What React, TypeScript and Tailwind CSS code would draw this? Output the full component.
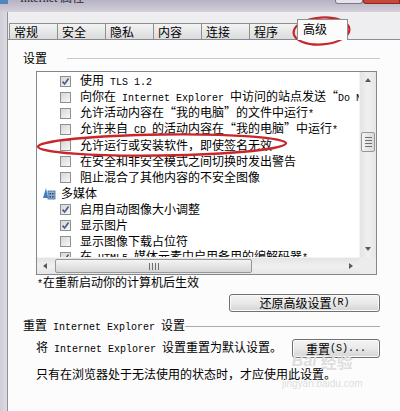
import React from "react";

const CN = "font-['Noto_Sans_CJK_SC',sans-serif]";

function L({ children }: { children: React.ReactNode }) {
  return <span className="font-['Liberation_Mono',monospace] text-[10px]">{children}</span>;
}

function Check({ on }: { on?: boolean }) {
  return (
    <span className="flex h-[11px] w-[11px] shrink-0 items-center justify-center border border-[#8e8f8f] bg-gradient-to-br from-[#d6d6d6] to-[#f7f7f7]">
      {on && (
        <svg width="9" height="9" viewBox="0 0 9 9">
          <path d="M1.5 4.6 L3.6 7 L7.6 1.4" stroke="#4b5d8c" strokeWidth="1.7" fill="none" />
        </svg>
      )}
    </span>
  );
}

function Arrow({ dir }: { dir: "up" | "down" | "left" | "right" }) {
  const d = {
    up: "M1 5 L4 1 L7 5 Z",
    down: "M1 2 L4 6 L7 2 Z",
    left: "M5 1 L1 4 L5 7 Z",
    right: "M2 1 L6 4 L2 7 Z",
  }[dir];
  return (
    <svg width="8" height="8" viewBox="0 0 8 8">
      <path d={d} fill="#5a5a5a" />
    </svg>
  );
}

function Grip({ vertical }: { vertical?: boolean }) {
  return vertical ? (
    <div className="flex flex-col gap-[2px]">
      <div className="h-[1px] w-[7px] bg-[#6f6f6f]" />
      <div className="h-[1px] w-[7px] bg-[#6f6f6f]" />
      <div className="h-[1px] w-[7px] bg-[#6f6f6f]" />
      <div className="h-[1px] w-[7px] bg-[#6f6f6f]" />
    </div>
  ) : (
    <div className="flex gap-[2px]">
      <div className="h-[7px] w-[1px] bg-[#6f6f6f]" />
      <div className="h-[7px] w-[1px] bg-[#6f6f6f]" />
      <div className="h-[7px] w-[1px] bg-[#6f6f6f]" />
      <div className="h-[7px] w-[1px] bg-[#6f6f6f]" />
    </div>
  );
}

function MediaIcon() {
  return (
    <svg width="14" height="14" viewBox="0 0 14 14">
      <path d="M1 12 L4 2 L6 12 Z" fill="#3d7fc6" />
      <rect x="6" y="5" width="7" height="8" fill="#8fb3d9" stroke="#46689a" strokeWidth="0.8" />
      <rect x="7.5" y="7" width="1.5" height="1.5" fill="#1f3f6e" />
      <rect x="10" y="7" width="1.5" height="1.5" fill="#1f3f6e" />
      <rect x="7.5" y="10" width="1.5" height="1.5" fill="#1f3f6e" />
      <rect x="10" y="10" width="1.5" height="1.5" fill="#1f3f6e" />
    </svg>
  );
}

const rows: { on?: boolean; text: React.ReactNode }[] = [
  { on: true, text: <>使用<L> TLS 1.2</L></> },
  { text: <>向你在<L> Internet Explorer </L>中访问的站点发送“<L>Do Not Track</L>”请求</> },
  { text: <>允许活动内容在“我的电脑”的文件中运行<L>*</L></> },
  { text: <>允许来自<L> CD </L>的活动内容在“我的电脑”中运行<L>*</L></> },
  { text: <>允许运行或安装软件，即使签名无效</> },
  { text: <>在安全和非安全模式之间切换时发出警告</> },
  { text: <>阻止混合了其他内容的不安全图像</> },
];

const media: { on?: boolean; text: React.ReactNode }[] = [
  { on: true, text: <>启用自动图像大小调整</> },
  { on: true, text: <>显示图片</> },
  { text: <>显示图像下载占位符</> },
  { on: true, text: <>在<L> HTML5 </L>媒体元素中启用备用的编解码器<L>*</L></> },
];

const tabs = ["常规", "安全", "隐私", "内容", "连接", "程序"];

function Button({ children, w }: { children: React.ReactNode; w: string }) {
  return (
    <div
      className={`flex items-center justify-center rounded-[3px] border border-[#707070] bg-gradient-to-b from-[#f4f4f4] via-[#e9e9e9] to-[#d3d3d3] text-[12px] leading-[14px] shadow-[inset_0_0_0_1px_#fbfbfb] ${w}`}
    >
      {children}
    </div>
  );
}

export default function App() {
  return (
    <div className={`relative h-[411px] w-[400px] overflow-hidden bg-[#d6d4dc] text-black ${CN}`}>
      {/* title bar, cut at top */}
      <div className="flex h-[12px] overflow-hidden bg-gradient-to-b from-[#b7b2c3] to-[#d3d0da]">
        <div className="-mt-[9px] ml-[0px] h-[13px] w-[8px] bg-[#4f86c0]" />
        <div className="-mt-[10px] ml-[12px] text-[12px] leading-[14px] text-[#2a2a35]">
          <span className="font-['Liberation_Serif',serif] text-[12px]">Internet </span>属性
        </div>
        <div className="ml-auto flex h-[4px]">
          <div className="w-[28px] rounded-b-[3px] border border-t-0 border-[#7c7a86] bg-[#e6e4ea]" />
          <div className="w-[37px] rounded-bl-[3px] border border-t-0 border-[#8a2a22] bg-[#c9463a]" />
        </div>
      </div>

      <div className="flex h-[399px]">
        <div className="w-[8px] shrink-0 border-r border-[#8e8f97] bg-gradient-to-r from-[#cfcdd6] to-[#dcdbe2]" />
        <div className="flex min-w-0 flex-1 flex-col bg-[#eeeef1]">
          {/* tabs */}
          <div className="mt-[7px] flex h-[20px] items-end pl-[1px]">
            {tabs.map((t) => (
              <div
                key={t}
                className="flex h-[16px] w-[48px] items-center border-l border-t border-[#8e8f8f] bg-gradient-to-b from-[#f3f3f3] to-[#dcdcdc] pl-[4px] text-[12px] leading-[14px] last:border-r last:w-[48px]"
              >
                {t}
              </div>
            ))}
            <div className="relative z-10 -mb-[1px] flex h-[21px] w-[51px] items-start border-x border-t border-[#8e8f8f] bg-[#fcfcfc] pl-[5px] pt-[2px] text-[12px] leading-[14px]">
              高级
            </div>
          </div>

          {/* panel */}
          <div className="flex flex-1 flex-col border-t border-[#898c95] bg-[#fcfcfc]">
            <div className="mt-[11px] flex h-[14px] items-center pl-[15px] pr-[20px]">
              <span className="text-[12px] leading-[14px]">设置</span>
              <div className="ml-[20px] h-[1px] flex-1 bg-[#c6c8cc]" />
            </div>

            {/* list box */}
            <div className="ml-[28px] mt-[6px] grid h-[204px] w-[341px] grid-cols-[1fr_17px] grid-rows-[1fr_17px] border border-[#828790] bg-white">
              <div className="overflow-hidden pt-[1px] text-[12px] leading-[16px]">
                {rows.map((r, i) => (
                  <div key={i} className="flex h-[16px] items-center gap-[9px] whitespace-nowrap pl-[23px]">
                    <Check on={r.on} />
                    <span>{r.text}</span>
                  </div>
                ))}
                <div className="flex h-[16px] items-center gap-[5px] whitespace-nowrap pl-[5px]">
                  <MediaIcon />
                  <span>多媒体</span>
                </div>
                {media.map((r, i) => (
                  <div key={i} className="flex h-[16px] items-center gap-[9px] whitespace-nowrap pl-[23px]">
                    <Check on={r.on} />
                    <span>{r.text}</span>
                  </div>
                ))}
              </div>

              {/* vertical scrollbar */}
              <div className="flex flex-col border-l border-[#f4f4f4] bg-gradient-to-r from-[#e4e4e4] via-[#f0f0f0] to-[#e6e6e6]">
                <div className="flex h-[17px] items-center justify-center">
                  <Arrow dir="up" />
                </div>
                <div className="h-[43px]" />
                <div className="mx-[1px] flex h-[20px] items-center justify-center rounded-[2px] border border-[#979797] bg-gradient-to-r from-[#f4f4f4] to-[#d9d9d9]">
                  <Grip vertical />
                </div>
                <div className="flex-1" />
                <div className="flex h-[17px] items-center justify-center">
                  <Arrow dir="down" />
                </div>
              </div>

              {/* horizontal scrollbar */}
              <div className="flex items-stretch border-t border-[#f4f4f4] bg-gradient-to-b from-[#e4e4e4] via-[#f0f0f0] to-[#e6e6e6]">
                <div className="flex w-[17px] items-center justify-center">
                  <Arrow dir="left" />
                </div>
                <div className="my-[1px] ml-[1px] flex w-[197px] items-center justify-center rounded-[2px] border border-[#979797] bg-gradient-to-b from-[#f4f4f4] to-[#d6d6d6]">
                  <Grip />
                </div>
                <div className="flex-1" />
                <div className="flex w-[17px] items-center justify-center">
                  <Arrow dir="right" />
                </div>
              </div>
              <div className="bg-[#ececec]" />
            </div>

            <div className="ml-[29px] h-[14px] text-[12px] leading-[14px]">
              <L>*</L>在重新启动你的计算机后生效
            </div>

            <div className="mt-[5px] flex justify-end pr-[20px]">
              <Button w="h-[18px] w-[151px]">
                还原高级设置<L>(R)</L>
              </Button>
            </div>

            <div className="mt-[7px] flex h-[14px] items-center pl-[15px] pr-[20px]">
              <span className="whitespace-nowrap text-[12px] leading-[14px]">
                重置<L> Internet Explorer </L>设置
              </span>
              <div className="h-[1px] flex-1 bg-[#a9abae]" />
            </div>

            <div className="mt-[6px] flex h-[19px] items-center pl-[28px] pr-[20px]">
              <span className="whitespace-nowrap text-[12px] leading-[14px]">
                将<L> Internet Explorer </L>设置重置为默认设置。
              </span>
              <div className="ml-auto">
                <Button w="h-[19px] w-[88px]">
                  重置<L>(S)...</L>
                </Button>
              </div>
            </div>

            <div className="mt-[9px] h-[14px] whitespace-nowrap pl-[28px] text-[12px] leading-[14px]">
              只有在浏览器处于无法使用的状态时，才应使用此设置。
            </div>
          </div>
        </div>
      </div>

      {/* watermark */}
      <div className="pointer-events-none absolute left-[282px] top-[352px] flex flex-col items-center text-[#dedede]">
        <div className="flex items-center gap-[4px] text-[16px] font-bold leading-[18px]">
          <span className="font-['Liberation_Sans',sans-serif] italic">Bai</span>
          <span>经验</span>
        </div>
        <div className="mt-[8px] font-['Liberation_Sans',sans-serif] text-[10px] leading-[12px]">jingyan.baidu.com</div>
      </div>

      {/* red annotation ellipses */}
      <svg className="pointer-events-none absolute left-0 top-0" width="400" height="411" viewBox="0 0 400 411">
        <ellipse cx="321.5" cy="31" rx="28" ry="13.5" fill="none" stroke="#c8262a" strokeWidth="2.2" transform="rotate(-4 321.5 31)" />
        <ellipse cx="162" cy="145" rx="124" ry="10.5" fill="none" stroke="#c8262a" strokeWidth="2.4" transform="rotate(-0.8 162 145)" />
      </svg>
    </div>
  );
}
